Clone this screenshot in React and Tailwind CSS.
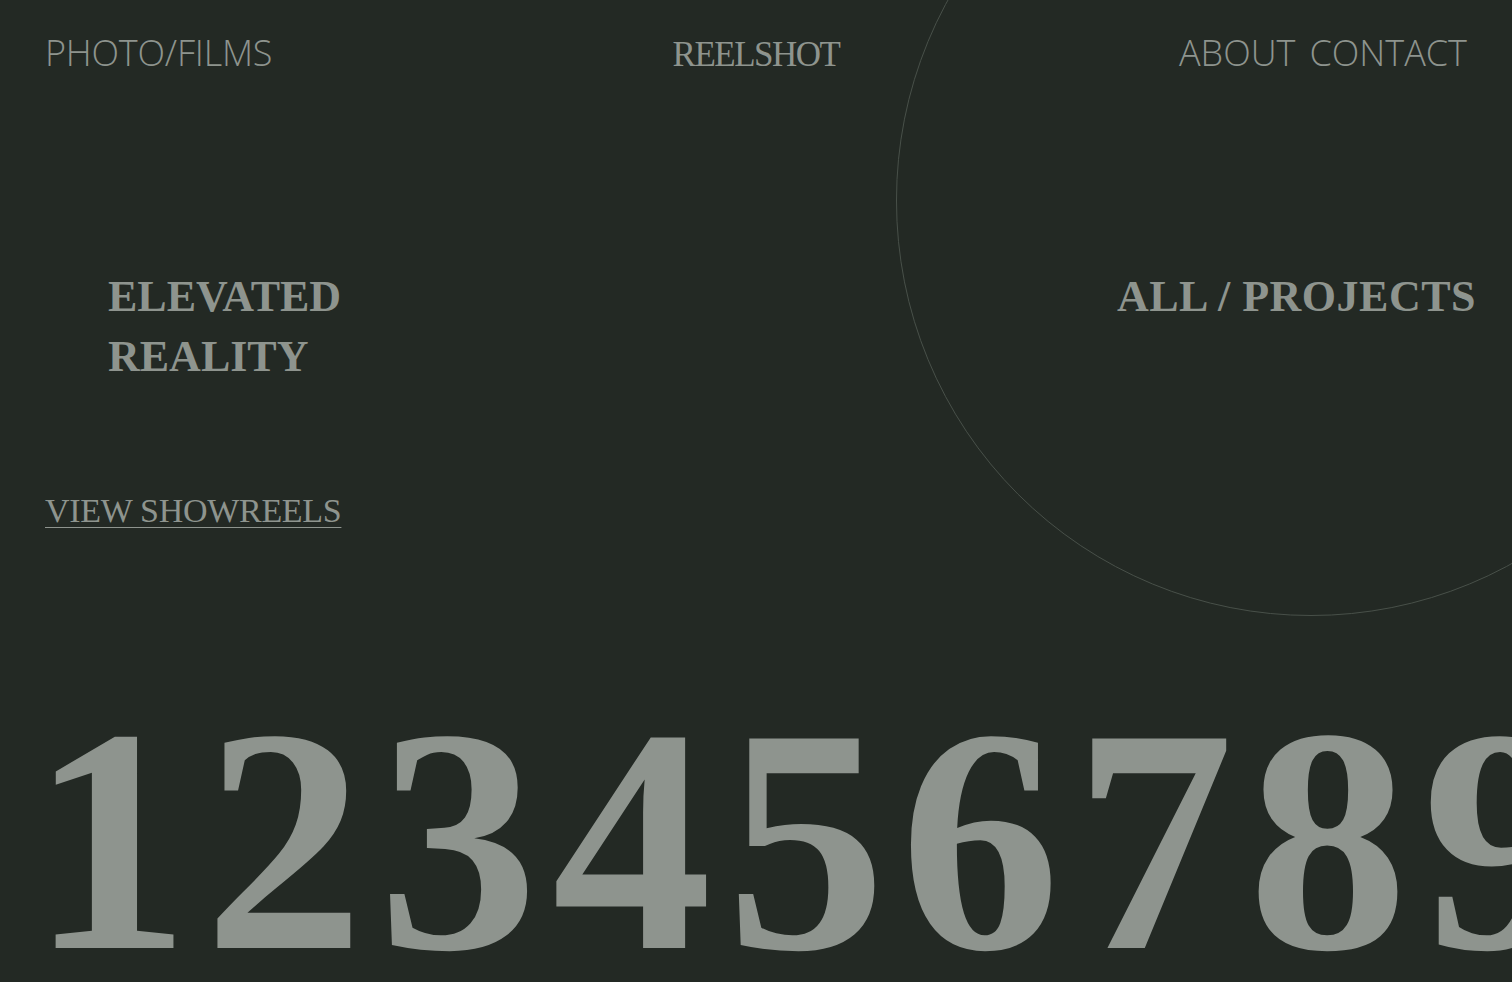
import React from "react";

export default function App() {
  return (
    <div className="relative w-[1512px] h-[982px] overflow-hidden bg-[#232924] text-[#8e948e]">
      <div className="absolute left-[896px] top-[-215px] w-[830px] h-[831px] rounded-full border border-[#485049]" />
      <div className="relative">
        <header className="grid grid-cols-3 items-baseline px-[45px] pt-[35px]">
          <div className="justify-self-start text-[36px] leading-none font-light font-['Open_Sans',sans-serif] tracking-[-0.2px]">
            PHOTO/FILMS
          </div>
          <div className="justify-self-center text-[35px] leading-none font-['Liberation_Serif',serif] tracking-[-1.5px]">
            REELSHOT
          </div>
          <nav className="justify-self-end flex gap-[14px] text-[36px] leading-none font-light font-['Open_Sans',sans-serif]">
            <span>ABOUT</span>
            <span>CONTACT</span>
          </nav>
        </header>

        <section className="mt-[195px] flex justify-between pl-[108px] pr-[36px] font-['Liberation_Serif',serif] font-bold text-[44px] leading-[60px]">
          <div>
            <div>ELEVATED</div>
            <div>REALITY</div>
          </div>
          <div className="tracking-[0.5px]">ALL / PROJECTS</div>
        </section>

        <div className="mt-[107px] px-[45px]">
          <a className="text-[34px] leading-none font-['Liberation_Serif',serif] tracking-[-0.3px] underline decoration-1 underline-offset-[5px]">
            VIEW SHOWREELS
          </a>
        </div>

        <div className="mt-[152px] pl-[30px] whitespace-nowrap text-[320px] leading-none font-bold font-['Liberation_Serif',serif] tracking-[14px]">
          123456789
        </div>
      </div>
    </div>
  );
}
